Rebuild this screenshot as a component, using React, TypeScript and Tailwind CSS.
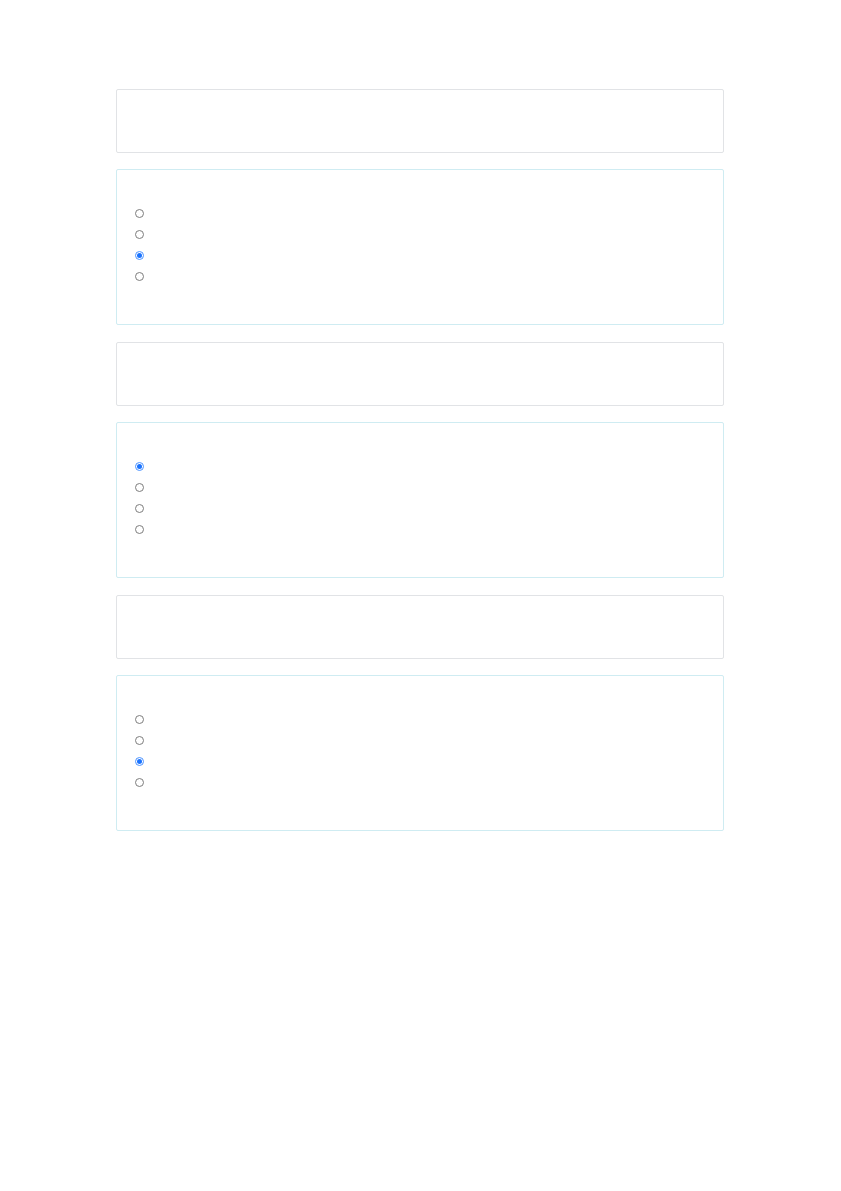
import React from "react";

type Question = { id: number; selected: number };

const questions: Question[] = [
  { id: 1, selected: 2 },
  { id: 2, selected: 0 },
  { id: 3, selected: 2 },
];

const Radio: React.FC<{ checked: boolean }> = ({ checked }) =>
  checked ? (
    <span className="flex h-[9px] w-[9px] items-center justify-center rounded-full border border-[#4d94ff] bg-white">
      <span className="h-[5px] w-[5px] rounded-full bg-[#1a73ff]" />
    </span>
  ) : (
    <span className="block h-[9px] w-[9px] rounded-full border border-[#7d7d7d] bg-white" />
  );

export default function App() {
  return (
    <div className="min-h-[1191px] bg-white pt-[89px] font-['Liberation_Sans',sans-serif]">
      <div className="ml-[116px] flex w-[608px] flex-col">
        {questions.map((q) => (
          <div key={q.id} className="mb-[17px] flex flex-col">
            {/* Question header */}
            <div className="h-[64px] rounded-[2px] border border-[#e1e3e6] bg-white" />

            {/* Options */}
            <div className="mt-[16px] h-[156px] rounded-[2px] border border-[#cfecf2] bg-white pt-[33px] pl-[18px]">
              {[0, 1, 2, 3].map((i) => (
                <label key={i} className="flex h-[21px] items-center">
                  <Radio checked={q.selected === i} />
                </label>
              ))}
            </div>
          </div>
        ))}
      </div>
    </div>
  );
}
